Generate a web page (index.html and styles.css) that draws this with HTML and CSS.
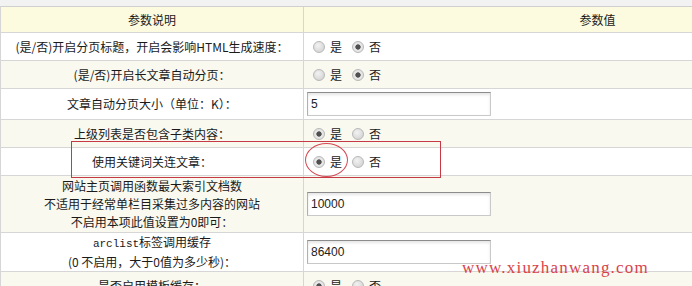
FILE: index.html
```html
<!DOCTYPE html>
<html lang="zh-CN">
<head>
    <meta charset="UTF-8">
    <title>系统基本参数</title>
    <link rel="stylesheet" href="styles.css">
</head>
<body>
    <div class="page">
        <div class="setting-table">
            <div class="row head">
                <div class="cell label"><span>参数说明</span></div>
                <div class="cell value center">参数值</div>
            </div>
            <div class="row">
                <div class="cell label"><span>(是/否)开启分页标题，开启会影响HTML生成速度：</span></div>
                <div class="cell value">
                    <label class="opt"><input type="radio" name="cfg_arc_title"> 是</label>
                    <label class="opt"><input type="radio" name="cfg_arc_title" checked> 否</label>
                </div>
            </div>
            <div class="row alt">
                <div class="cell label"><span>(是/否)开启长文章自动分页：</span></div>
                <div class="cell value">
                    <label class="opt"><input type="radio" name="cfg_arcautosp"> 是</label>
                    <label class="opt"><input type="radio" name="cfg_arcautosp" checked> 否</label>
                </div>
            </div>
            <div class="row tall">
                <div class="cell label"><span>文章自动分页大小（单位：K）：</span></div>
                <div class="cell value"><input class="txt" type="text" value="5"></div>
            </div>
            <div class="row alt">
                <div class="cell label"><span>上级列表是否包含子类内容：</span></div>
                <div class="cell value">
                    <label class="opt"><input type="radio" name="cfg_list_son" checked> 是</label>
                    <label class="opt"><input type="radio" name="cfg_list_son"> 否</label>
                </div>
            </div>
            <div class="row">
                <div class="cell label"><span>使用关键词关连文章：</span></div>
                <div class="cell value">
                    <label class="opt"><input type="radio" name="cfg_keyword_like" checked> 是</label>
                    <label class="opt"><input type="radio" name="cfg_keyword_like"> 否</label>
                </div>
            </div>
            <div class="row alt three">
                <div class="cell label"><span>网站主页调用函数最大索引文档数<br>不适用于经常单栏目采集过多内容的网站<br>不启用本项此值设置为0即可：</span></div>
                <div class="cell value"><input class="txt" type="text" value="10000"></div>
            </div>
            <div class="row two">
                <div class="cell label"><span><span class="mono">arclist</span>标签调用缓存<br>(0 不启用，大于0值为多少秒)：</span></div>
                <div class="cell value"><input class="txt" type="text" value="86400"></div>
            </div>
            <div class="row alt">
                <div class="cell label"><span>是否启用模板缓存：</span></div>
                <div class="cell value">
                    <label class="opt"><input type="radio" name="cfg_tplcache" checked> 是</label>
                    <label class="opt"><input type="radio" name="cfg_tplcache"> 否</label>
                </div>
            </div>
        </div>

        <!-- annotation drawn over the screenshot -->
        <div class="mark-box"></div>
        <div class="mark-ring"></div>
        <div class="watermark">www.xiuzhanwang.com</div>
    </div>
</body>
</html>
```

FILE: styles.css
```css
html, body {
    margin: 0;
    overflow: hidden;
}
body {
    background-color: #f2f2f2;
    font-family: "Noto Sans CJK SC", sans-serif;
    font-size: 12px;
    color: #1a1a1a;
}
.page {
    position: relative;
    width: 692px;
    height: 286px;
    overflow: hidden;
    padding-top: 6px;
    box-sizing: border-box;
}
.setting-table {
    width: 890px;
    border-top: 1px solid #d0d0d0;
    border-left: 1px solid #d6d6d6;
}
.row {
    display: grid;
    grid-template-columns: 303px 1fr;
    box-sizing: border-box;
    height: 28px;
    border-bottom: 1px solid #d6d6d6;
    background-color: #fff;
}
.row.alt {
    background-color: #f9f9ef;
}
.row.head {
    height: 26px;
    background-color: #fcfbe0;
}
.row.tall {
    height: 31px;
}
.row.three {
    height: 57px;
}
.row.two {
    height: 39px;
}
.cell {
    display: flex;
    align-items: center;
    line-height: 18px;
}
.label {
    box-sizing: border-box;
    justify-content: center;
    text-align: center;
    border-right: 1px solid #d6d6d6;
}
.value {
    padding-left: 3px;
}
.value.center {
    justify-content: center;
    padding-left: 0;
}
.mono {
    font-family: "Liberation Mono", monospace;
    font-size: 11px;
}
.opt {
    display: flex;
    align-items: center;
    margin-left: 6px;
    margin-right: 4px;
}
.opt input {
    appearance: none;
    -webkit-appearance: none;
    width: 12px;
    height: 12px;
    margin: 0 5px 0 0;
    border: 1px solid #b8b8b8;
    border-radius: 50%;
    background: radial-gradient(circle at 40% 35%, #f2f2f2, #cdcdcd);
    box-sizing: border-box;
}
.opt input:checked {
    background: radial-gradient(circle, #505050 0 2.3px, #e9e9e9 3px, #dcdcdc 100%);
}
.txt {
    width: 184px;
    height: 24px;
    box-sizing: border-box;
    margin: 0;
    padding: 0 3px;
    border: 1px solid #c9c9c9;
    border-top-color: #8c8c8c;
    border-left-color: #b0b0b0;
    box-shadow: inset 0 2px 3px rgba(0, 0, 0, 0.1);
    font-family: "Liberation Sans", sans-serif;
    font-size: 12px;
    color: #222;
}
.mark-box {
    position: absolute;
    left: 71px;
    top: 141px;
    width: 370px;
    height: 37px;
    box-sizing: border-box;
    border: 1px solid #c53a44;
}
.mark-ring {
    position: absolute;
    left: 305px;
    top: 143px;
    width: 43px;
    height: 34px;
    box-sizing: border-box;
    border: 1px solid #d54a55;
    border-radius: 50%;
}
.watermark {
    position: absolute;
    left: 462px;
    top: 258px;
    font-family: "Liberation Serif", serif;
    font-size: 17px;
    letter-spacing: 1.2px;
    color: #d8434b;
}
```
